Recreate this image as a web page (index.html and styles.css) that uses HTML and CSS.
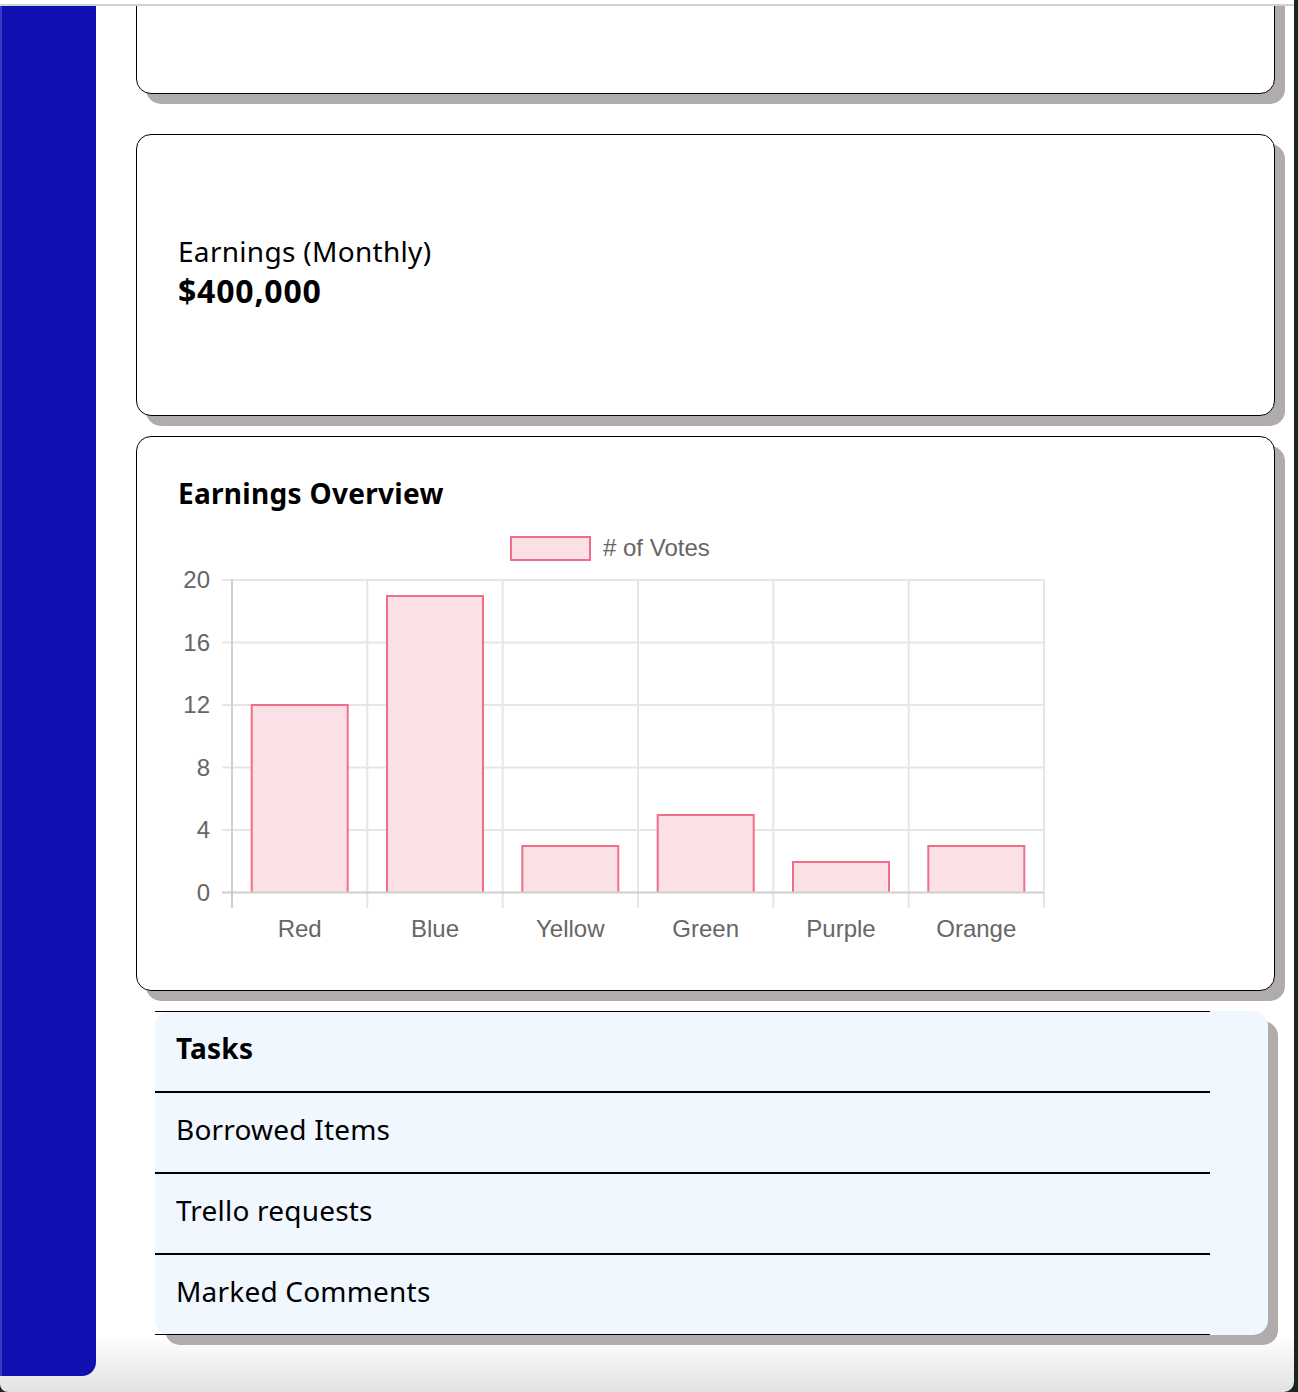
FILE: index.html
```html
<!DOCTYPE html>
<html lang="en">
<head>
<meta charset="utf-8">
<title>Dashboard</title>
<link rel="stylesheet" href="styles.css">
</head>
<body>
<div class="window">
  <div class="topline"></div>
  <div class="app">
    <aside class="sidebar"></aside>
    <main class="main">
      <section class="card card-cut"></section>
      <section class="card card-stat">
        <div class="stat-label">Earnings (Monthly)</div>
        <div class="stat-value">$400,000</div>
      </section>
      <section class="card card-chart">
        <h2 class="card-title">Earnings Overview</h2>
        <svg class="chart" width="1000" height="440" viewBox="0 0 1000 440">
          <g class="legend">
            <rect x="333" y="23" width="79" height="23" fill="#fbe1e6" stroke="#f06f88" stroke-width="2"/>
            <text x="425" y="42" class="tick">&#35; of Votes</text>
          </g>
          <g stroke="#e6e6e6" stroke-width="2">
            <line x1="44" y1="66" x2="866" y2="66"/>
            <line x1="44" y1="128.5" x2="866" y2="128.5"/>
            <line x1="44" y1="191" x2="866" y2="191"/>
            <line x1="44" y1="253.5" x2="866" y2="253.5"/>
            <line x1="44" y1="316" x2="866" y2="316"/>
            <line x1="189.3" y1="66" x2="189.3" y2="394"/>
            <line x1="324.7" y1="66" x2="324.7" y2="394"/>
            <line x1="460" y1="66" x2="460" y2="394"/>
            <line x1="595.3" y1="66" x2="595.3" y2="394"/>
            <line x1="730.7" y1="66" x2="730.7" y2="394"/>
            <line x1="866" y1="66" x2="866" y2="394"/>
          </g>
          <g fill="#fbe1e6" stroke="#f06f88" stroke-width="2">
            <path d="M73.7 378.5 V191 H169.7 V378.5"/>
            <path d="M209 378.5 V82 H305 V378.5"/>
            <path d="M344.3 378.5 V332 H440.3 V378.5"/>
            <path d="M479.7 378.5 V301 H575.7 V378.5"/>
            <path d="M615 378.5 V348 H711 V378.5"/>
            <path d="M750.3 378.5 V332 H846.3 V378.5"/>
          </g>
          <g stroke="#cfcfcf" stroke-width="2">
            <line x1="54" y1="66" x2="54" y2="394"/>
            <line x1="44" y1="378.5" x2="866" y2="378.5"/>
          </g>
          <g class="tick" text-anchor="end">
            <text x="32" y="74">20</text>
            <text x="32" y="137">16</text>
            <text x="32" y="199">12</text>
            <text x="32" y="262">8</text>
            <text x="32" y="324">4</text>
            <text x="32" y="387">0</text>
          </g>
          <g class="tick" text-anchor="middle">
            <text x="121.7" y="423">Red</text>
            <text x="257" y="423">Blue</text>
            <text x="392.3" y="423">Yellow</text>
            <text x="527.7" y="423">Green</text>
            <text x="663" y="423">Purple</text>
            <text x="798.3" y="423">Orange</text>
          </g>
        </svg>
      </section>
      <ul class="tasks">
        <li class="task task-head">Tasks</li>
        <li class="task">Borrowed Items</li>
        <li class="task">Trello requests</li>
        <li class="task">Marked Comments</li>
      </ul>
    </main>
  </div>
</div>
</body>
</html>
```
FILE: styles.css
```css
html, body {
  margin: 0;
  padding: 0;
}
body {
  background: #1a2423;
  width: 1298px;
  height: 1392px;
  overflow: hidden;
  font-family: "Noto Sans", "Open Sans", sans-serif;
  color: #000;
}
.window {
  width: 1294px;
  height: 1392px;
  background: linear-gradient(to bottom, #ffffff 0, #ffffff 1335px, #e3e3e3 1392px);
  border-radius: 0 0 10px 8px;
  overflow: hidden;
}
.topline {
  height: 2px;
  margin-top: 4px;
  background: #d2d2d2;
}
.app {
  display: flex;
  align-items: flex-start;
  height: 1370px;
}
.sidebar {
  flex: none;
  width: 94px;
  height: 1370px;
  border-left: 2px solid #3a3ac6;
  background: #1111b1;
  border-bottom-right-radius: 14px;
}
.main {
  flex: none;
  width: 1160px;
  height: 1370px;
  padding-left: 40px;
  overflow: hidden;
}
.card {
  box-sizing: border-box;
  width: 1139px;
  background: #fff;
  border: 1px solid #000;
  border-radius: 15px;
  box-shadow: 10px 10px 0 #b1acac;
}
.card-cut {
  height: 150px;
  margin-top: -62px;
}
.card-stat {
  height: 282px;
  margin-top: 40px;
  padding: 96px 41px 0;
}
.stat-label {
  font-size: 28px;
  line-height: 40px;
  letter-spacing: 0.3px;
}
.stat-value {
  font-size: 32px;
  font-weight: 700;
  line-height: 40px;
  letter-spacing: 0.8px;
}
.card-chart {
  height: 555px;
  margin-top: 20px;
  padding: 36px 41px 0;
}
.card-title {
  margin: 0;
  font-size: 28px;
  font-weight: 700;
  line-height: 40px;
  letter-spacing: 0.3px;
}
.chart {
  display: block;
  margin-top: 1px;
}
.tick {
  font-family: "Liberation Sans", Arial, sans-serif;
  font-size: 24px;
  fill: #666666;
}
.tasks {
  list-style: none;
  margin: 20px 0 0 19px;
  padding: 0;
  width: 1113px;
  background: #f0f7fe;
  border-radius: 15px;
  box-shadow: 10px 10px 0 #b1acac;
}
.task {
  box-sizing: border-box;
  width: 1055px;
  height: 81px;
  border-top: 1px solid #000;
  border-bottom: 1px solid #000;
  padding-left: 21px;
  font-size: 28px;
  line-height: 73px;
  letter-spacing: 0.2px;
}
.task-head {
  font-weight: 700;
}
```
